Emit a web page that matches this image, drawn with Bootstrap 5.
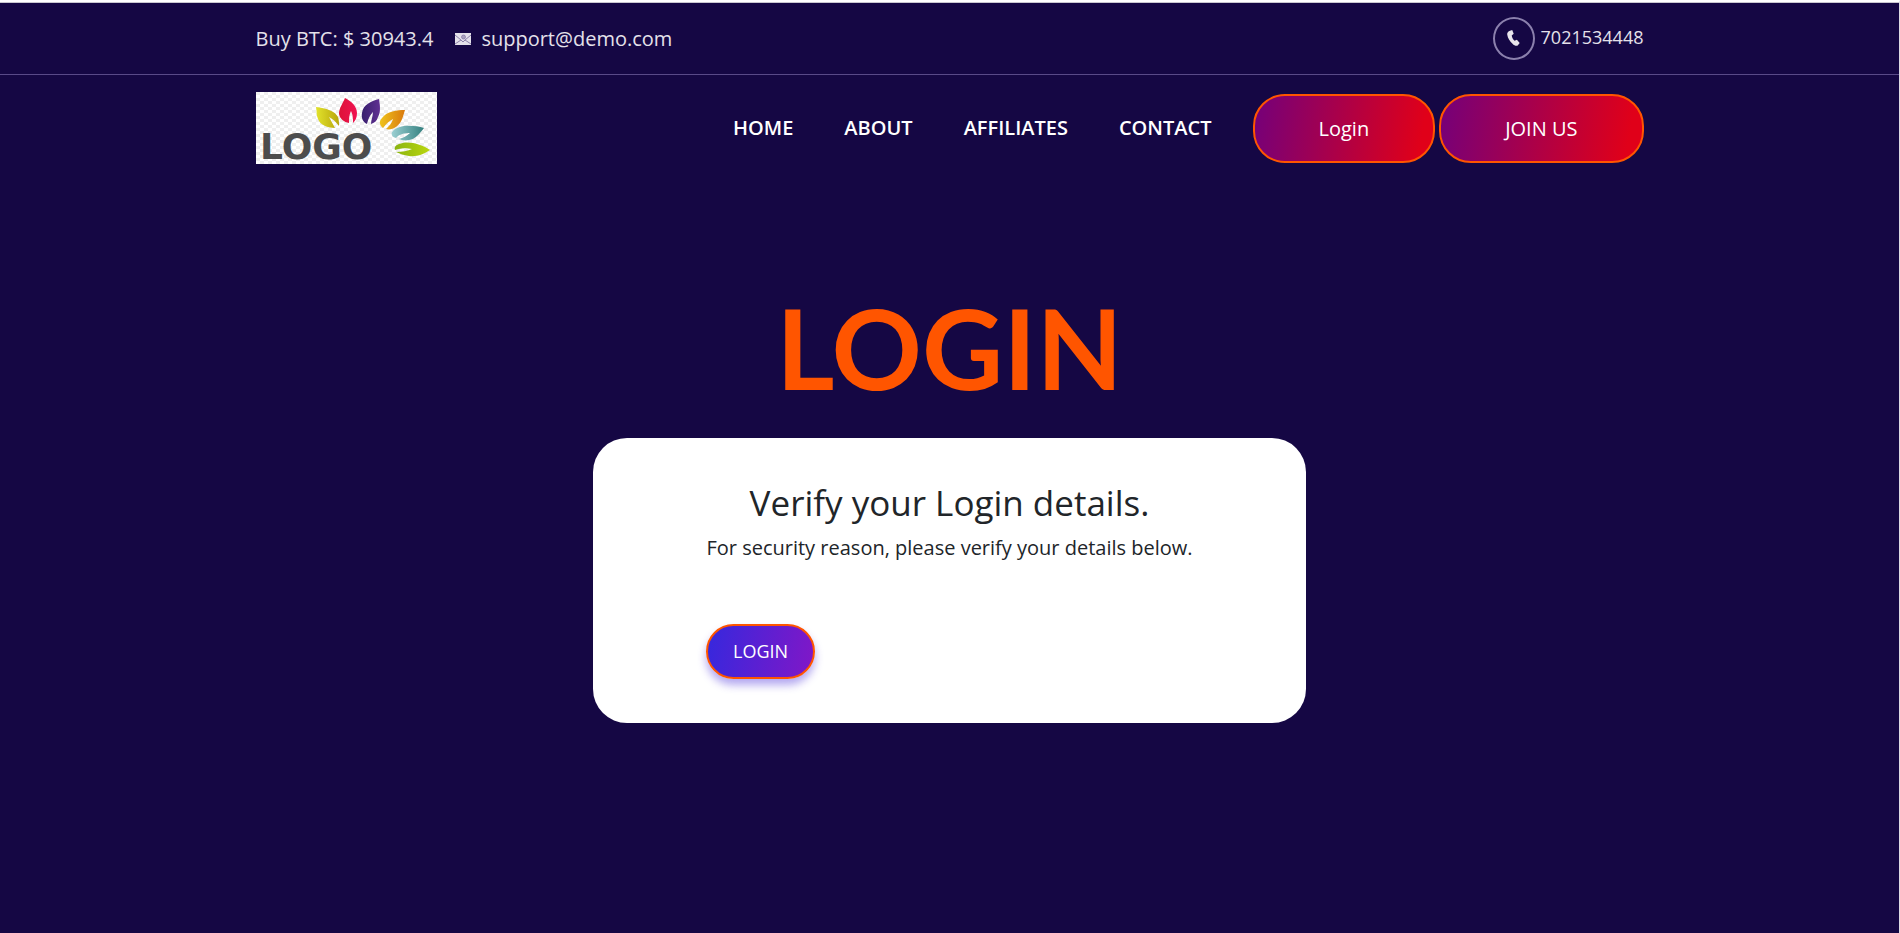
<!DOCTYPE html>
<html lang="en">
<head>
<meta charset="utf-8">
<meta name="viewport" content="width=device-width, initial-scale=1">
<title>Login</title>
<link href="https://cdn.jsdelivr.net/npm/bootstrap@5.3.0/dist/css/bootstrap.min.css" rel="stylesheet">
<style>
  body { font-family: "Open Sans", "Noto Sans", sans-serif; font-size: 20px; line-height: 30px; color: #212529; }
  a { text-decoration: none; }
  .page { background: #150744; border-top: 2px solid #fff; border-right: 1px solid #dcdae3; box-shadow: inset 0 1px #c9c7d0; }
  .site-width { max-width: 1420px; padding-left: 16px; padding-right: 16px; }
  .top-bar { border-bottom: 1px solid #594a88; color: #e4e1ea; padding: 15px 0 14px; }
  .top-bar a { color: inherit; }
  .contact-line { gap: 10px; padding-top: 1px; }
  .contact-line svg { margin-left: 12px; }
  .phone-ring { width: 42px; height: 43px; border: 2px solid #8b80ad; }
  .phone-number { font-size: 18px; line-height: 40px; }
  .phone-link { gap: 6px; }
  .main-nav { padding: 17px 0; }
  .main-nav .nav-links { gap: 51px; margin-right: 41px; }
  .main-nav .nav-link { color: #fff; font-weight: 600; padding: 0; }
  .logo { overflow: visible; }
  .btn-pill { color: #fff; border: 2px solid #ff5500; border-radius: 32px; font-size: 20px; line-height: 29px; padding: 18px 64px; background: linear-gradient(100deg, #74007a 0%, #e00019 92%); }
  .btn-pill:hover { color: #fff; border-color: #ff5500; }
  .hero { padding-top: 106px; }
  .hero-title { font-family: Lato, sans-serif; font-weight: 700; font-size: 112px; line-height: 120px; color: #ff5500; margin-bottom: 31px; }
  .login-box { max-width: 713px; border-radius: 34px; padding: 43px 113px 44px; }
  .login-box h2 { font-size: 35px; line-height: 44px; font-weight: 400; margin-bottom: 8px; }
  .login-box p { margin-bottom: 61px; }
  .btn-login { color: #fff; font-size: 18px; line-height: 27px; padding: 12px 25px; border: 2px solid #ff5500; border-radius: 28px; background: linear-gradient(100deg, #3a27dc 5%, #7d18c8 95%); box-shadow: 0 6px 8px rgba(66, 38, 217, .4); }
  .btn-login:hover { color: #fff; border-color: #ff5500; }
</style>
</head>
<body>
<div class="page min-vh-100">
  <div class="top-bar">
    <div class="container-fluid site-width d-flex align-items-center justify-content-between">
      <div class="contact-line d-flex align-items-center">
        <span>Buy BTC: $ 30943.4</span>
        <svg width="16" height="12" viewBox="0 0 16 12" aria-hidden="true">
          <rect width="16" height="12" fill="#e4e1ea"/>
          <path d="M0 2 6 7 8 9l2-2 6-5M0 11l6-4M16 11l-6-4" fill="none" stroke="#8b80a8"/>
          <circle cx="8.500" cy="4" r="2" fill="#aaa2bf" stroke="#8175a2" stroke-width=".7"/>
        </svg>
        <a href="mailto:support@demo.com">support@demo.com</a>
      </div>
      <a class="phone-link d-flex" href="tel:7021534448">
        <span class="phone-ring rounded-circle d-flex align-items-center justify-content-center">
          <svg width="13" height="17" viewBox="0 0 13 17" aria-hidden="true">
            <path d="M3 .8 5.200 0l1.500 3.800-2 1.600c.3 2 1.400 4 2.900 5.300l2.300-.9 2.800 3.100-2 2.600c-1.500.9-3.500 0-5.200-1.800C2.700 11.500.800 8.200.200 4.600 0 2.700 1.200 1.300 3 .8z" fill="#e9e5ec"/>
          </svg>
        </span>
        <span class="phone-number">7021534448</span>
      </a>
    </div>
  </div>

  <header class="main-nav">
    <div class="container-fluid site-width d-flex align-items-center justify-content-between">
      <a href="#" aria-label="Home">
        <svg class="logo d-block" width="181" height="72" viewBox="0 0 181 72">
          <defs>
            <pattern id="checks" width="8" height="6" patternUnits="userSpaceOnUse"><path d="M0 0h4v3H0zM4 3h4v3H4z" fill="#efefef"/></pattern>
            <linearGradient id="lime"><stop stop-color="#e2e32c"/><stop offset="1" stop-color="#b8a60c"/></linearGradient>
            <linearGradient id="rose"><stop stop-color="#dd1238"/><stop offset="1" stop-color="#f01352"/></linearGradient>
            <linearGradient id="violet"><stop stop-color="#38206e"/><stop offset="1" stop-color="#603092"/></linearGradient>
            <linearGradient id="amber"><stop stop-color="#efc31c"/><stop offset="1" stop-color="#d9790e"/></linearGradient>
            <linearGradient id="teal"><stop stop-color="#9bcfd2"/><stop offset="1" stop-color="#34807f"/></linearGradient>
            <linearGradient id="leaf"><stop stop-color="#8cb511"/><stop offset="1" stop-color="#bad60e"/></linearGradient>
          </defs>
          <rect width="181" height="72" fill="#fff"/>
          <rect width="181" height="72" fill="url(#checks)"/>
          <path d="M60 15c10 1 19 4 22 10 1 3 1 6 1 9-3-4-6-7-10-9 2 4 4 7 6 11-7 0-15-3-17-9-2-4-1-8-2-12z" fill="url(#lime)"/>
          <path d="M89 6c6 3 12 8 12 15 0 5-2 8-4 10 0-4 0-8-2-12-2 4-2 8-2 12-5-1-9-4-10-9 0-6 4-11 6-16z" fill="url(#rose)"/>
          <path d="M123 7c1 6 2 13-1 18-1 4-4 6-7 7 0-4 2-8 2-12-3 3-5 7-6 12-4-2-6-6-5-11 1-9 10-12 17-14z" fill="url(#violet)"/>
          <path d="M149 18c-2 6-3 13-9 17-3 2-7 3-10 2 3-3 6-6 7-10-4 2-7 5-10 9-4-3-4-7-1-10 5-7 15-8 23-8z" fill="url(#amber)"/>
          <path d="M168 36c-4 5-8 11-15 12-4 1-8 0-10-1 4-1 8-3 11-6-5 0-11 1-14 5-4-1-5-4-4-6 6-8 22-7 32-4z" fill="url(#teal)"/>
          <path d="M174 58c-6 4-13 7-21 6-5-1-9-2-13-4 6 0 12-1 16-3-5-1-11-1-17 1-1-3 1-5 4-6 8-4 23 0 31 6z" fill="url(#leaf)"/>
          <text x="4" y="67" font-family="DejaVu Sans, sans-serif" font-weight="700" font-size="36" fill="#4d4d4d">LOGO</text>
        </svg>
      </a>
      <div class="d-flex align-items-center">
        <nav class="nav nav-links">
          <a class="nav-link" href="#">HOME</a>
          <a class="nav-link" href="#">ABOUT</a>
          <a class="nav-link" href="#">AFFILIATES</a>
          <a class="nav-link" href="#">CONTACT</a>
        </nav>
        <div class="d-flex gap-1">
          <a class="btn btn-pill" href="#">Login</a>
          <a class="btn btn-pill" href="#">JOIN US</a>
        </div>
      </div>
    </div>
  </header>

  <main class="hero container-fluid site-width">
    <h1 class="hero-title text-center">LOGIN</h1>
    <form class="login-box bg-white mx-auto" onsubmit="return false">
      <h2 class="text-center">Verify your Login details.</h2>
      <p class="text-center text-nowrap">For security reason, please verify your details below.</p>
      <button class="btn btn-login" type="submit">LOGIN</button>
    </form>
  </main>
</div>
<script src="https://cdn.jsdelivr.net/npm/bootstrap@5.3.0/dist/js/bootstrap.bundle.min.js"></script>
</body>
</html>
